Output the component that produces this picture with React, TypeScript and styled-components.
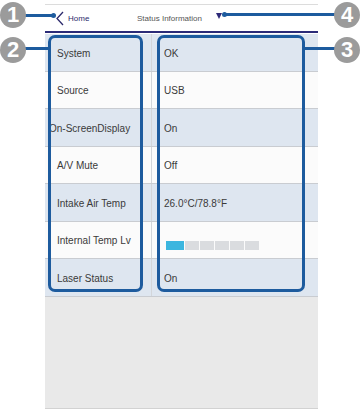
import React from "react";
import styled, { createGlobalStyle } from "styled-components";

const Global = createGlobalStyle`
  html, body { margin: 0; padding: 0; background: #ffffff; }
  body { font-family: "Liberation Sans", Arial, sans-serif; }
`;

const Page = styled.div`
  position: relative;
  width: 360px;
  height: 411px;
  overflow: hidden;
  background: #ffffff;
`;

const Screen = styled.div`
  margin-left: 45px;
  width: 273px;
  display: flex;
  flex-direction: column;
`;

const TopRule = styled.div`
  margin-top: 4px;
  height: 1px;
  background: #dcdcdc;
`;

const Header = styled.div`
  height: 26px;
  display: flex;
  align-items: center;
  position: relative;
`;

const Back = styled.div`
  display: flex;
  align-items: center;
  gap: 4px;
  margin-left: 11px;
  color: #2c2a6c;
  font-size: 8px;
`;

const Title = styled.div`
  position: absolute;
  left: 92px;
  top: 0;
  height: 26px;
  display: flex;
  align-items: center;
  gap: 14px;
  color: #555;
  font-size: 8px;
`;

const Tri = styled.span`
  width: 0;
  height: 0;
  border-left: 3.5px solid transparent;
  border-right: 3.5px solid transparent;
  border-top: 6px solid #2d2a78;
  margin-top: -4px;
`;

const NavyRule = styled.div`
  height: 2px;
  background: #2b2b78;
`;

const Table = styled.div`
  margin-top: 1px;
  display: flex;
  flex-direction: column;
`;

const Row = styled.div<{ $tint: boolean }>`
  height: 37.5px;
  box-sizing: border-box;
  display: grid;
  grid-template-columns: 107px 1fr;
  background: ${(p) => (p.$tint ? "#dee6f0" : "#fbfbfb")};
  border-bottom: 1px solid #c9ccd1;
`;

const Label = styled.div<{ $tight?: boolean }>`
  display: flex;
  align-items: center;
  padding-left: ${(p) => (p.$tight ? 4 : 12)}px;
  padding-top: 2px;
  font-size: 10px;
  color: #3a3a3a;
  white-space: nowrap;
  border-right: 1px solid #d3d6da;
`;

const Value = styled.div`
  display: flex;
  align-items: center;
  padding-left: 12px;
  padding-top: 2px;
  font-size: 10px;
  color: #3a3a3a;
  white-space: nowrap;
`;

const Bar = styled.div`
  display: flex;
  gap: 1px;
  margin-top: 10px;
  margin-left: 2px;
`;

const Seg = styled.div<{ $on: boolean }>`
  width: ${(p) => (p.$on ? 18 : 14)}px;
  height: 9px;
  background: ${(p) => (p.$on ? "#3cb6df" : "#dadcdf")};
`;

const Filler = styled.div`
  height: 111px;
  background: #e9e9e9;
  border-bottom: 1px solid #d2d2d2;
`;

const Box = styled.div<{ $l: number; $w: number }>`
  position: absolute;
  left: ${(p) => p.$l}px;
  top: 35px;
  width: ${(p) => p.$w}px;
  height: 257px;
  box-sizing: border-box;
  border: 3px solid #1d5b9e;
  border-radius: 7px;
`;

const Leader = styled.div<{ $l: number; $t: number; $w: number }>`
  position: absolute;
  left: ${(p) => p.$l}px;
  top: ${(p) => p.$t}px;
  width: ${(p) => p.$w}px;
  height: 2.5px;
  background: #1d5b9e;
`;

const Dot = styled.div<{ $l: number; $t: number }>`
  position: absolute;
  left: ${(p) => p.$l}px;
  top: ${(p) => p.$t}px;
  width: 5px;
  height: 5px;
  border-radius: 50%;
  background: #1d5b9e;
`;

const Badge = styled.div<{ $l: number; $t: number }>`
  position: absolute;
  left: ${(p) => p.$l}px;
  top: ${(p) => p.$t}px;
  width: 26px;
  height: 26px;
  border-radius: 50%;
  background: #9b9b9b;
  color: #ffffff;
  display: flex;
  align-items: center;
  justify-content: center;
  font-family: "Liberation Sans", Arial, sans-serif;
  font-weight: bold;
  font-size: 22px;
  line-height: 1;
`;

const rows: { label: string; value: string; tight?: boolean; bar?: boolean }[] = [
  { label: "System", value: "OK" },
  { label: "Source", value: "USB" },
  { label: "On-ScreenDisplay", value: "On", tight: true },
  { label: "A/V Mute", value: "Off" },
  { label: "Intake Air Temp", value: "26.0°C/78.8°F" },
  { label: "Internal Temp Lv", value: "", bar: true },
  { label: "Laser Status", value: "On" },
];

export default function App() {
  return (
    <Page>
      <Global />
      <Screen>
        <TopRule />
        <Header>
          <Back>
            <svg width="8" height="15" viewBox="0 0 8 15">
              <path d="M7 1 L1 7.5 L7 14" fill="none" stroke="#2c2a6c" strokeWidth="1.3" />
            </svg>
            <span>Home</span>
          </Back>
          <Title>
            <span>Status Information</span>
            <Tri />
          </Title>
        </Header>
        <NavyRule />
        <Table>
          {rows.map((r, i) => (
            <Row key={r.label} $tint={i % 2 === 0}>
              <Label $tight={r.tight}>{r.label}</Label>
              <Value>
                {r.bar ? (
                  <Bar>
                    {[0, 1, 2, 3, 4, 5].map((s) => (
                      <Seg key={s} $on={s === 0} />
                    ))}
                  </Bar>
                ) : (
                  r.value
                )}
              </Value>
            </Row>
          ))}
        </Table>
        <Filler />
      </Screen>

      <Box $l={48} $w={95} />
      <Box $l={157} $w={148} />

      <Leader $l={20} $t={14} $w={34} />
      <Dot $l={51} $t={12.5} />
      <Badge $l={0} $t={2}>1</Badge>

      <Leader $l={20} $t={47} $w={29} />
      <Badge $l={0} $t={37}>2</Badge>

      <Leader $l={304} $t={47} $w={34} />
      <Badge $l={334} $t={37}>3</Badge>

      <Leader $l={224} $t={13} $w={114} />
      <Dot $l={222} $t={11.5} />
      <Badge $l={334} $t={2}>4</Badge>
    </Page>
  );
}
